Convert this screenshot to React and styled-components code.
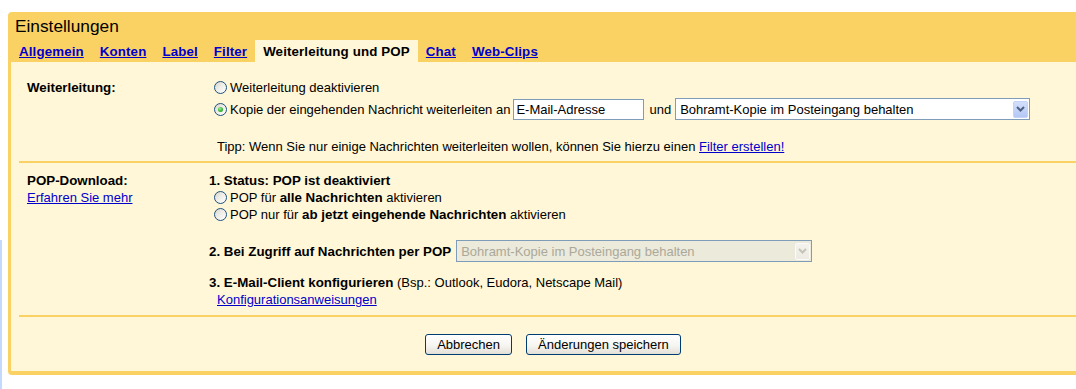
import React from 'react';
import styled, { createGlobalStyle } from 'styled-components';

const GlobalStyle = createGlobalStyle`
  html, body { margin: 0; padding: 0; overflow: hidden; background: #fff; }
  body { font-family: "Liberation Sans", Arial, sans-serif; font-size: 13px; color: #000; }
`;

const BOLD_SIZE = '13.33px';

const Page = styled.div`
  display: flex;
  align-items: flex-start;
  padding-top: 12px;
  min-height: 389px;
  box-sizing: border-box;
`;

const SideStrip = styled.div`
  flex: none;
  width: 2px;
  align-self: stretch;
  margin-top: 228px;
  background: #c3d9ff;
`;

const Panel = styled.div`
  flex: none;
  width: 1090px;
  margin-left: 6px;
  box-sizing: border-box;
  background: #fad163;
  border-radius: 4px 0 0 4px;
  padding: 0 3px 4px;
`;

const Title = styled.h1`
  margin: 0;
  padding: 4px 0 4px 4px;
  font-size: 17.3px;
  font-weight: normal;
  line-height: 20px;
`;

const TabBar = styled.div`
  display: flex;
  height: 22px;
`;

const Tab = styled.a`
  box-sizing: border-box;
  height: 22px;
  padding: 1px 8px 0;
  line-height: 21px;
  font-size: ${BOLD_SIZE};
  font-weight: bold;
  letter-spacing: 0.12px;
  white-space: nowrap;
  cursor: pointer;
  color: ${p => (p.$active ? '#000' : '#0000cc')};
  text-decoration: ${p => (p.$active ? 'none' : 'underline')};
  background: ${p => (p.$active ? '#fff7d7' : 'transparent')};
`;

const Content = styled.div`
  background: #fff7d7;
`;

const Section = styled.div`
  display: grid;
  grid-template-columns: 190px 1fr;
  margin: 0 8px;
  padding: ${p => p.$pad};
  border-bottom: 2px solid #fad163;
`;

const SectionLabel = styled.div`
  padding-left: 8px;
  line-height: 17px;
`;

const LabelTitle = styled.div`
  font-weight: bold;
  font-size: ${BOLD_SIZE};
`;

const Strong = styled.b`
  font-weight: bold;
  font-size: ${BOLD_SIZE};
`;

const Link = styled.a`
  color: #0000cc;
  text-decoration: underline;
  cursor: pointer;
`;

const Options = styled.div`
  display: flex;
  flex-direction: column;
  line-height: 17px;
`;

const OptionRow = styled.label`
  display: flex;
  align-items: center;
  height: ${p => p.$h || 17}px;
  white-space: nowrap;
`;

const Radio = styled.input.attrs({ type: 'radio' })`
  appearance: none;
  -webkit-appearance: none;
  flex: none;
  position: relative;
  box-sizing: border-box;
  width: 13px;
  height: 13px;
  margin: 0 3px 0 5px;
  border-radius: 50%;
  border: 1px solid #1c5180;
  background: linear-gradient(135deg, #d6d5cc 0%, #eeede8 45%, #fff 100%);

  &:checked::after {
    content: '';
    position: absolute;
    left: 3px;
    top: 3px;
    width: 5px;
    height: 5px;
    border-radius: 50%;
    background: radial-gradient(circle at 40% 35%, #a8f0a0 0%, #3fbf3f 45%, #1f8f1f 100%);
  }
`;

const Tail = styled.span``;

const TextInput = styled.input`
  box-sizing: border-box;
  width: 131px;
  height: 21px;
  margin: 0 5px 0 3px;
  border: 1px solid #7f9db9;
  padding: 0 2px;
  font-family: inherit;
  font-size: 13px;
  color: #000;
  background: #fff;
  outline: none;
`;

const SelectBox = styled.div`
  box-sizing: border-box;
  display: flex;
  align-items: center;
  flex: none;
  width: ${p => p.$w}px;
  height: 22px;
  margin-left: ${p => p.$ml}px;
  padding: 0 1px 0 4px;
  border: 1px solid #7f9db9;
  background: ${p => (p.$disabled ? '#ebeadb' : '#fff')};
  color: ${p => (p.$disabled ? '#aca899' : '#000')};
`;

const SelectText = styled.span`
  flex: 1;
  white-space: nowrap;
  overflow: hidden;
`;

const SelectArrow = styled.span`
  flex: none;
  box-sizing: border-box;
  width: 15px;
  height: 17px;
  display: flex;
  align-items: center;
  justify-content: center;
  border-radius: 2px;
  border: 1px solid ${p => (p.$disabled ? '#fbfbf8' : '#c4d3f7')};
  background: ${p =>
    p.$disabled
      ? 'linear-gradient(#f4f3ee, #eceae2)'
      : 'linear-gradient(#d3defb, #b4c8f5)'};
`;

const Tip = styled.div`
  margin-top: 16px;
  padding-left: 8px;
  white-space: nowrap;
`;

const StepTitle = styled.div`
  font-weight: bold;
  font-size: ${BOLD_SIZE};
`;

const StepRow = styled.div`
  display: flex;
  align-items: center;
  height: 22px;
  margin-top: 17px;
  white-space: nowrap;
`;

const StepLine = styled.div`
  margin-top: 12px;
  white-space: nowrap;
`;

const IndentLink = styled.div`
  padding-left: 8px;
`;

const ButtonBar = styled.div`
  display: flex;
  justify-content: center;
  gap: 14px;
  margin: 0 8px;
  padding: 17px 0 16px;
`;

const Button = styled.button`
  box-sizing: border-box;
  height: 21px;
  padding: 0 11px;
  border: 1px solid #003c74;
  border-radius: 3px;
  background: linear-gradient(#ffffff 0%, #f6f5f1 55%, #e2e0d6 100%);
  font-family: inherit;
  font-size: 13px;
  color: #000;
  cursor: pointer;
`;

const Chevron = ({ color }) => (
  <svg width="9" height="6" viewBox="0 0 9 6">
    <polyline points="1,1 4.5,4.5 8,1" fill="none" stroke={color} strokeWidth="2" />
  </svg>
);

const Select = ({ width, ml, disabled, children }) => (
  <SelectBox $w={width} $ml={ml} $disabled={disabled}>
    <SelectText>{children}</SelectText>
    <SelectArrow $disabled={disabled}>
      <Chevron color={disabled ? '#c6c4b8' : '#4d6185'} />
    </SelectArrow>
  </SelectBox>
);

const tabs = ['Allgemein', 'Konten', 'Label', 'Filter', 'Weiterleitung und POP', 'Chat', 'Web-Clips'];

export default function App() {
  return (
    <>
      <GlobalStyle />
      <Page>
        <SideStrip />
        <Panel>
          <Title>Einstellungen</Title>
          <TabBar>
            {tabs.map(t => (
              <Tab key={t} $active={t === 'Weiterleitung und POP'}>{t}</Tab>
            ))}
          </TabBar>
          <Content>
            <Section $pad="17px 0 6px">
              <SectionLabel>
                <LabelTitle>Weiterleitung:</LabelTitle>
              </SectionLabel>
              <Options>
                <OptionRow>
                  <Radio name="fwd" />
                  <Tail>Weiterleitung deaktivieren</Tail>
                </OptionRow>
                <OptionRow $h={26}>
                  <Radio name="fwd" defaultChecked />
                  <Tail>Kopie der eingehenden Nachricht weiterleiten an</Tail>
                  <TextInput defaultValue="E-Mail-Adresse" />
                  <Tail>und</Tail>
                  <Select width={355} ml={4}>Bohramt-Kopie im Posteingang behalten</Select>
                </OptionRow>
                <Tip>
                  Tipp: Wenn Sie nur einige Nachrichten weiterleiten wollen, können Sie hierzu einen{' '}
                  <Link>Filter erstellen!</Link>
                </Tip>
              </Options>
            </Section>
            <Section $pad="9px 0 7px">
              <SectionLabel>
                <LabelTitle>POP-Download:</LabelTitle>
                <Link>Erfahren Sie mehr</Link>
              </SectionLabel>
              <Options>
                <StepTitle>1. Status: POP ist deaktiviert</StepTitle>
                <OptionRow>
                  <Radio name="pop" />
                  <Tail>POP für <Strong>alle Nachrichten</Strong> aktivieren</Tail>
                </OptionRow>
                <OptionRow>
                  <Radio name="pop" />
                  <Tail>POP nur für <Strong>ab jetzt eingehende Nachrichten</Strong> aktivieren</Tail>
                </OptionRow>
                <StepRow>
                  <StepTitle>2. Bei Zugriff auf Nachrichten per POP</StepTitle>
                  <Select width={356} ml={5} disabled>Bohramt-Kopie im Posteingang behalten</Select>
                </StepRow>
                <StepLine>
                  <Strong>3. E-Mail-Client konfigurieren</Strong> (Bsp.: Outlook, Eudora, Netscape Mail)
                </StepLine>
                <IndentLink>
                  <Link>Konfigurationsanweisungen</Link>
                </IndentLink>
              </Options>
            </Section>
            <ButtonBar>
              <Button>Abbrechen</Button>
              <Button>Änderungen speichern</Button>
            </ButtonBar>
          </Content>
        </Panel>
      </Page>
    </>
  );
}
